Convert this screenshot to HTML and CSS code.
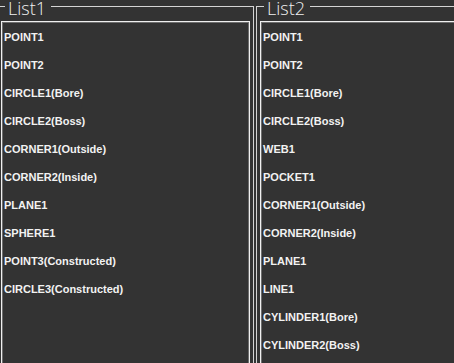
FILE: index.html
```html
<!DOCTYPE html>
<html lang="en">
<head>
    <meta charset="UTF-8">
    <meta name="viewport" content="width=device-width, initial-scale=1.0">
    <title>Feature Lists</title>
    <link rel="stylesheet" href="styles.css">
</head>
<body>

    <div class="groups">
        <div class="group">
            <div class="group-head">
                <span class="edge-l"></span>
                <span class="title">List1</span>
                <span class="edge-r"></span>
            </div>
            <div class="group-body">
                <ul class="listbox">
                    <li>POINT1</li>
                    <li>POINT2</li>
                    <li>CIRCLE1(Bore)</li>
                    <li>CIRCLE2(Boss)</li>
                    <li>CORNER1(Outside)</li>
                    <li>CORNER2(Inside)</li>
                    <li>PLANE1</li>
                    <li>SPHERE1</li>
                    <li>POINT3(Constructed)</li>
                    <li>CIRCLE3(Constructed)</li>
                </ul>
            </div>
        </div>

        <div class="group">
            <div class="group-head">
                <span class="edge-l"></span>
                <span class="title">List2</span>
                <span class="edge-r"></span>
            </div>
            <div class="group-body">
                <ul class="listbox">
                    <li>POINT1</li>
                    <li>POINT2</li>
                    <li>CIRCLE1(Bore)</li>
                    <li>CIRCLE2(Boss)</li>
                    <li>WEB1</li>
                    <li>POCKET1</li>
                    <li>CORNER1(Outside)</li>
                    <li>CORNER2(Inside)</li>
                    <li>PLANE1</li>
                    <li>LINE1</li>
                    <li>CYLINDER1(Bore)</li>
                    <li>CYLINDER2(Boss)</li>
                </ul>
            </div>
        </div>
    </div>

</body>
</html>
```

FILE: styles.css
```css
html, body {
    margin: 0;
    height: 100%;
    overflow: hidden;
}
body {
    background: #333333;
    font-family: 'Liberation Sans', Arial, sans-serif;
    color: #f2f2f2;
}
.groups {
    display: flex;
    gap: 2px;
    margin-left: -3px;
}
.group {
    flex-shrink: 0;
    width: 257px;
}

/* groupbox header: line - title - line */
.group-head {
    display: flex;
    height: 16px;
}
.edge-l, .edge-r {
    box-sizing: border-box;
    margin-top: 6px;
    border-top: 1px solid #d4d4d4;
}
.edge-l {
    width: 8px;
    border-left: 1px solid #d4d4d4;
}
.edge-r {
    flex: 1;
    border-right: 1px solid #d4d4d4;
}
.title {
    padding: 0 5px 0 3px;
    font-family: 'Open Sans', 'Liberation Sans', sans-serif;
    font-weight: 300;
    font-size: 18px;
    line-height: 16px;
    color: #f0f0f0;
}

.group-body {
    height: 400px;
    padding: 5px 3px 0 3px;
    border-left: 1px solid #d4d4d4;
    border-right: 1px solid #d4d4d4;
}
.listbox {
    list-style: none;
    margin: 0;
    padding: 1px 2px 0 2px;
    height: 400px;
    border: 1px solid #f0f0f0;
    box-shadow: inset 0 0 0 1px #6e6e6e;
}
.listbox li {
    height: 28px;
    line-height: 28px;
    font-size: 11px;
    font-weight: bold;
    white-space: nowrap;
}
```
